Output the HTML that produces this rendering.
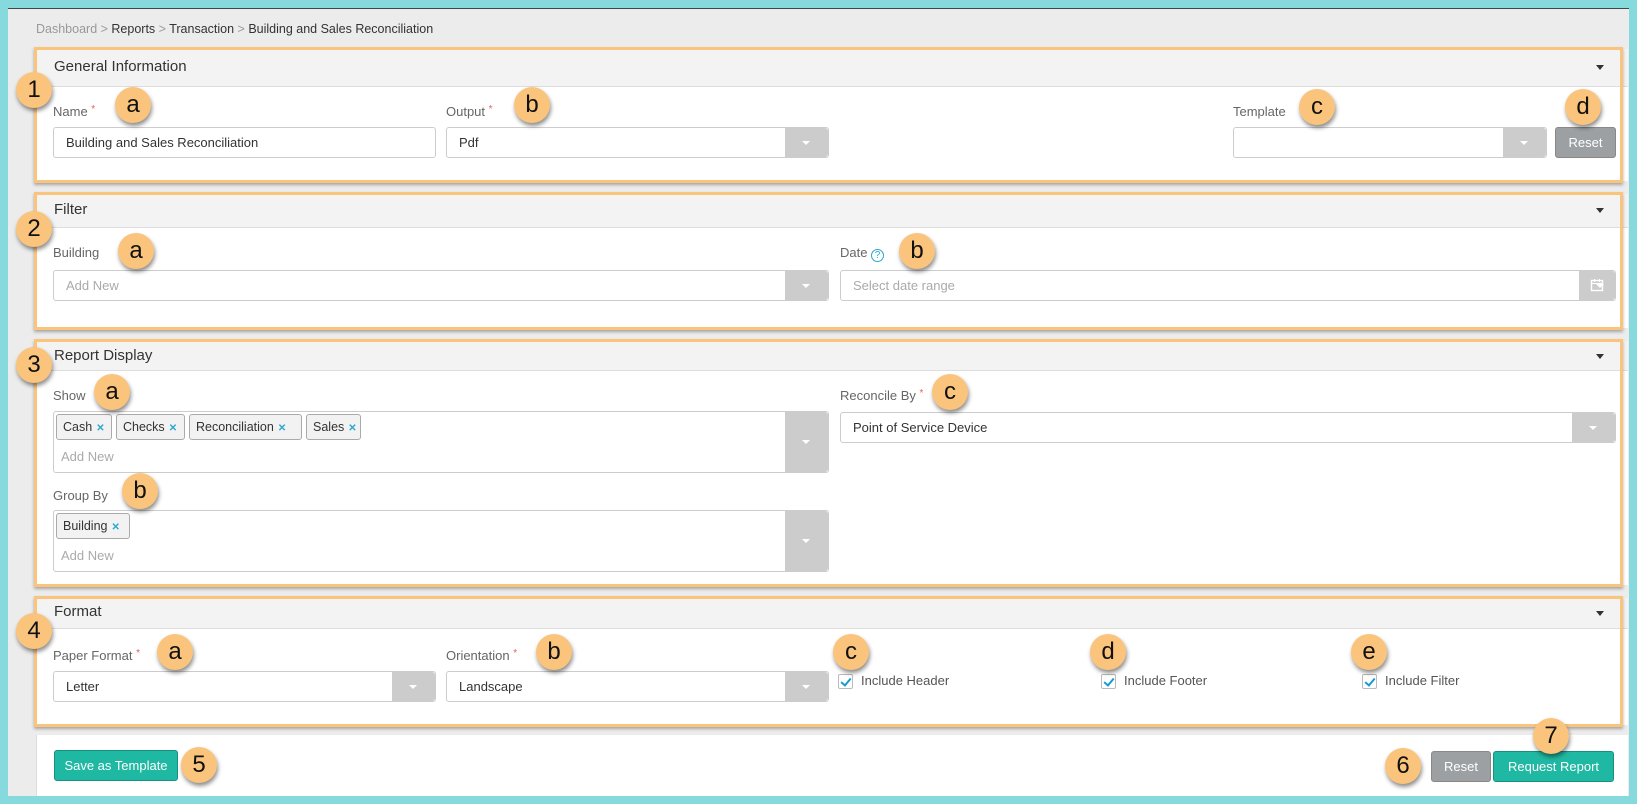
<!DOCTYPE html>
<html><head><meta charset="utf-8"><style>
*{box-sizing:border-box;margin:0;padding:0}
body{width:1637px;height:804px;background:#86dadd;font-family:"Liberation Sans",sans-serif;font-size:13px;color:#333;position:relative;overflow:hidden}
.a{position:absolute}
#main{left:8px;top:8px;width:1621px;height:788px;background:#ececec;border-top:1px solid #3a4a4a}
.panel{position:absolute;left:36px;width:1592px;background:#fff;border-left:1px solid #ddd}
.hd{position:absolute;left:0;top:0;right:0;background:#f3f3f3;border-bottom:1px solid #ddd;font-size:15px;color:#333;padding-left:17px}
.tri{position:absolute;right:24px;width:0;height:0;border-left:4px solid transparent;border-right:4px solid transparent;border-top:5px solid #333}
.or{position:absolute;left:34px;width:1589px;border:3px solid #fbc47c;box-shadow:0 2px 3px rgba(0,0,0,.3)}
.lbl{position:absolute;font-size:13px;color:#666}
.req{color:#e06060;font-size:10px;vertical-align:top}
.inp{position:absolute;height:31px;border:1px solid #ccc;border-radius:3px;background:#fff;font-size:13px;color:#333;padding-left:12px;line-height:29px}
.ph{color:#aaa}
.dd{position:absolute;right:0;top:0;bottom:0;width:43px;background:#ccc;border-radius:0 3px 3px 0}
.dd:after{content:"";position:absolute;left:17px;top:13px;border-left:4px solid transparent;border-right:4px solid transparent;border-top:4px solid #fff}
.tall .dd:after{top:28px}
.tag{position:absolute;height:26px;border:1px solid #aaa;border-radius:3px;background:#f2f2f2;padding:0 0 0 6px;line-height:24px;font-size:12.5px;color:#333;white-space:nowrap;overflow:hidden}
.tag b{color:#2aa8d0;font-size:10px;margin-left:4px}
.c{position:absolute;width:36px;height:36px;border-radius:50%;background:#fbc47c;box-shadow:1px 3px 4px rgba(0,0,0,.45);font-family:"Liberation Sans",sans-serif;font-size:24px;color:#111;text-align:center;line-height:36px;margin:-18px 0 0 -18px}
.btn{position:absolute;height:31px;border-radius:3px;color:#fff;font-size:13px;text-align:center;line-height:29px}
.gr{background:#9ca0a3;border:1px solid #888}
.tl{background:#1fb8a2;border:1px solid #17907f}
.cb{position:absolute;width:15px;height:15px;border:1px solid #bbb;border-radius:2px;background:#fff}
.cb:after{content:"";position:absolute;left:4px;top:1px;width:4px;height:8px;border-right:2px solid #1a9ad0;border-bottom:2px solid #1a9ad0;transform:rotate(40deg)}
.ct{position:absolute;font-size:13px;color:#555}
</style></head><body>
<div id="main" class="a"></div>
<div class="a" style="left:36px;top:22px;font-size:12.5px;color:#999">Dashboard &gt; <span style="color:#333">Reports</span> &gt; <span style="color:#333">Transaction</span> &gt; <span style="color:#333">Building and Sales Reconciliation</span></div>

<!-- panel 1 -->
<div class="panel" style="top:49px;height:132px"><div class="hd" style="height:38px;line-height:36px">General Information<div class="tri" style="top:16px"></div></div></div>
<div class="or" style="top:47px;height:136px"></div>
<div class="lbl" style="left:53px;top:104px">Name <span class="req">*</span></div>
<div class="inp" style="left:53px;top:127px;width:383px">Building and Sales Reconciliation</div>
<div class="lbl" style="left:446px;top:104px">Output <span class="req">*</span></div>
<div class="inp" style="left:446px;top:127px;width:383px">Pdf<div class="dd"></div></div>
<div class="lbl" style="left:1233px;top:104px">Template</div>
<div class="inp" style="left:1233px;top:127px;width:314px"><div class="dd"></div></div>
<div class="btn gr" style="left:1555px;top:127px;width:61px">Reset</div>

<!-- panel 2 -->
<div class="panel" style="top:194px;height:134px"><div class="hd" style="height:34px;line-height:32px">Filter<div class="tri" style="top:14px"></div></div></div>
<div class="or" style="top:192px;height:138px"></div>
<div class="lbl" style="left:53px;top:245px">Building</div>
<div class="inp ph" style="left:53px;top:270px;width:776px">Add New<div class="dd"></div></div>
<div class="lbl" style="left:840px;top:245px">Date <span style="display:inline-block;width:13px;height:13px;border:1px solid #2aa8d0;border-radius:50%;color:#2aa8d0;font-size:10px;text-align:center;line-height:11px;vertical-align:-1px">?</span></div>
<div class="inp ph" style="left:840px;top:270px;width:776px">Select date range<div class="dd" style="width:36px"></div></div>
<svg class="a" style="left:1590px;top:278px" width="14" height="14" viewBox="0 0 14 14"><rect x="1.5" y="2.5" width="11" height="10" fill="none" stroke="#fff" stroke-width="1.4"/><line x1="1.5" y1="5.5" x2="12.5" y2="5.5" stroke="#fff"/><line x1="4.5" y1="1" x2="4.5" y2="4" stroke="#fff"/><line x1="9.5" y1="1" x2="9.5" y2="4" stroke="#fff"/></svg>

<!-- panel 3 -->
<div class="panel" style="top:341px;height:244px"><div class="hd" style="height:30px;line-height:30px">Report Display<div class="tri" style="top:13px"></div></div></div>
<div class="or" style="top:339px;height:248px"></div>
<div class="lbl" style="left:53px;top:388px">Show</div>
<div class="inp tall" style="left:53px;top:411px;width:776px;height:62px"><div class="dd"></div></div>
<div class="tag" style="left:56px;top:414px;width:56px">Cash<b>✕</b></div>
<div class="tag" style="left:116px;top:414px;width:69px">Checks<b>✕</b></div>
<div class="tag" style="left:189px;top:414px;width:113px">Reconciliation<b>✕</b></div>
<div class="tag" style="left:306px;top:414px;width:55px">Sales<b>✕</b></div>
<div class="a" style="left:61px;top:449px;color:#aaa">Add New</div>
<div class="lbl" style="left:53px;top:488px">Group By</div>
<div class="inp tall" style="left:53px;top:510px;width:776px;height:62px"><div class="dd"></div></div>
<div class="tag" style="left:56px;top:513px;width:74px">Building<b>✕</b></div>
<div class="a" style="left:61px;top:548px;color:#aaa">Add New</div>
<div class="lbl" style="left:840px;top:388px">Reconcile By <span class="req">*</span></div>
<div class="inp" style="left:840px;top:412px;width:776px">Point of Service Device<div class="dd"></div></div>

<!-- panel 4 -->
<div class="panel" style="top:598px;height:127px"><div class="hd" style="height:31px;line-height:28px">Format<div class="tri" style="top:13px"></div></div></div>
<div class="or" style="top:596px;height:131px"></div>
<div class="lbl" style="left:53px;top:648px">Paper Format <span class="req">*</span></div>
<div class="inp" style="left:53px;top:671px;width:383px">Letter<div class="dd"></div></div>
<div class="lbl" style="left:446px;top:648px">Orientation <span class="req">*</span></div>
<div class="inp" style="left:446px;top:671px;width:383px">Landscape<div class="dd"></div></div>
<div class="cb" style="left:838px;top:674px"></div><div class="ct" style="left:861px;top:673px">Include Header</div>
<div class="cb" style="left:1101px;top:674px"></div><div class="ct" style="left:1124px;top:673px">Include Footer</div>
<div class="cb" style="left:1362px;top:674px"></div><div class="ct" style="left:1385px;top:673px">Include Filter</div>

<!-- footer -->
<div class="a" style="left:36px;top:735px;width:1592px;height:61px;background:#fff;border-left:1px solid #ddd"></div>
<div class="btn tl" style="left:54px;top:750px;width:124px">Save as Template</div>
<div class="btn gr" style="left:1431px;top:751px;width:60px">Reset</div>
<div class="btn tl" style="left:1493px;top:751px;width:121px">Request Report</div>

<!-- callouts -->
<div class="c" style="left:34px;top:90px">1</div>
<div class="c" style="left:133px;top:105px">a</div>
<div class="c" style="left:532px;top:105px">b</div>
<div class="c" style="left:1317px;top:107px">c</div>
<div class="c" style="left:1583px;top:107px">d</div>
<div class="c" style="left:34px;top:229px">2</div>
<div class="c" style="left:136px;top:251px">a</div>
<div class="c" style="left:917px;top:251px">b</div>
<div class="c" style="left:34px;top:365px">3</div>
<div class="c" style="left:112px;top:392px">a</div>
<div class="c" style="left:950px;top:392px">c</div>
<div class="c" style="left:140px;top:491px">b</div>
<div class="c" style="left:34px;top:631px">4</div>
<div class="c" style="left:175px;top:652px">a</div>
<div class="c" style="left:554px;top:652px">b</div>
<div class="c" style="left:851px;top:652px">c</div>
<div class="c" style="left:1108px;top:652px">d</div>
<div class="c" style="left:1369px;top:652px">e</div>
<div class="c" style="left:199px;top:765px">5</div>
<div class="c" style="left:1403px;top:766px">6</div>
<div class="c" style="left:1551px;top:736px">7</div>
</body></html>
